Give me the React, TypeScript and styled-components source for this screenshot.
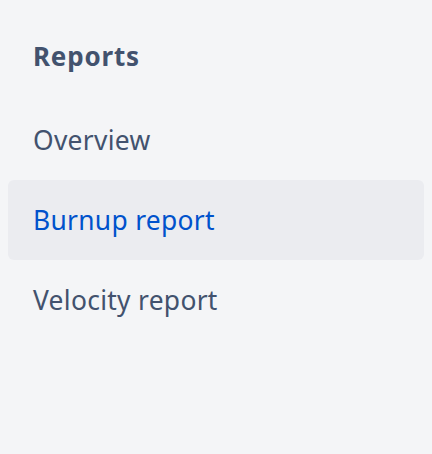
import React from "react";
import styled, { createGlobalStyle } from "styled-components";

const Global = createGlobalStyle`
  html, body { margin: 0; padding: 0; background: #F4F5F7; }
  body { font-family: "Noto Sans", Inter, sans-serif; -webkit-font-smoothing: antialiased; }
`;

const Nav = styled.nav`
  width: 432px;
  height: 454px;
  box-sizing: border-box;
  padding: 32px 8px;
  background: #F4F5F7;
  display: flex;
  flex-direction: column;
`;

const Heading = styled.h2`
  margin: 0 0 20px;
  height: 48px;
  display: flex;
  align-items: center;
  padding: 0 25px;
  font-size: 26px;
  font-weight: 700;
  letter-spacing: 0.8px;
  color: #42526E;
`;

const List = styled.ul`
  list-style: none;
  margin: 0;
  padding: 0;
  display: flex;
  flex-direction: column;
`;

const Item = styled.li<{ $selected?: boolean }>`
  height: 80px;
  display: flex;
  align-items: center;
  padding: 0 25px;
  border-radius: 6px;
  font-size: 26.4px;
  font-weight: 400;
  letter-spacing: 0.3px;
  color: ${(p) => (p.$selected ? "#0052CC" : "#42526E")};
  background: ${(p) => (p.$selected ? "#EBECF0" : "transparent")};
`;

const items = [
  { label: "Overview" },
  { label: "Burnup report", selected: true },
  { label: "Velocity report" },
];

export default function App() {
  return (
    <>
      <Global />
      <Nav>
        <Heading>Reports</Heading>
        <List>
          {items.map((it) => (
            <Item key={it.label} $selected={it.selected}>
              {it.label}
            </Item>
          ))}
        </List>
      </Nav>
    </>
  );
}
